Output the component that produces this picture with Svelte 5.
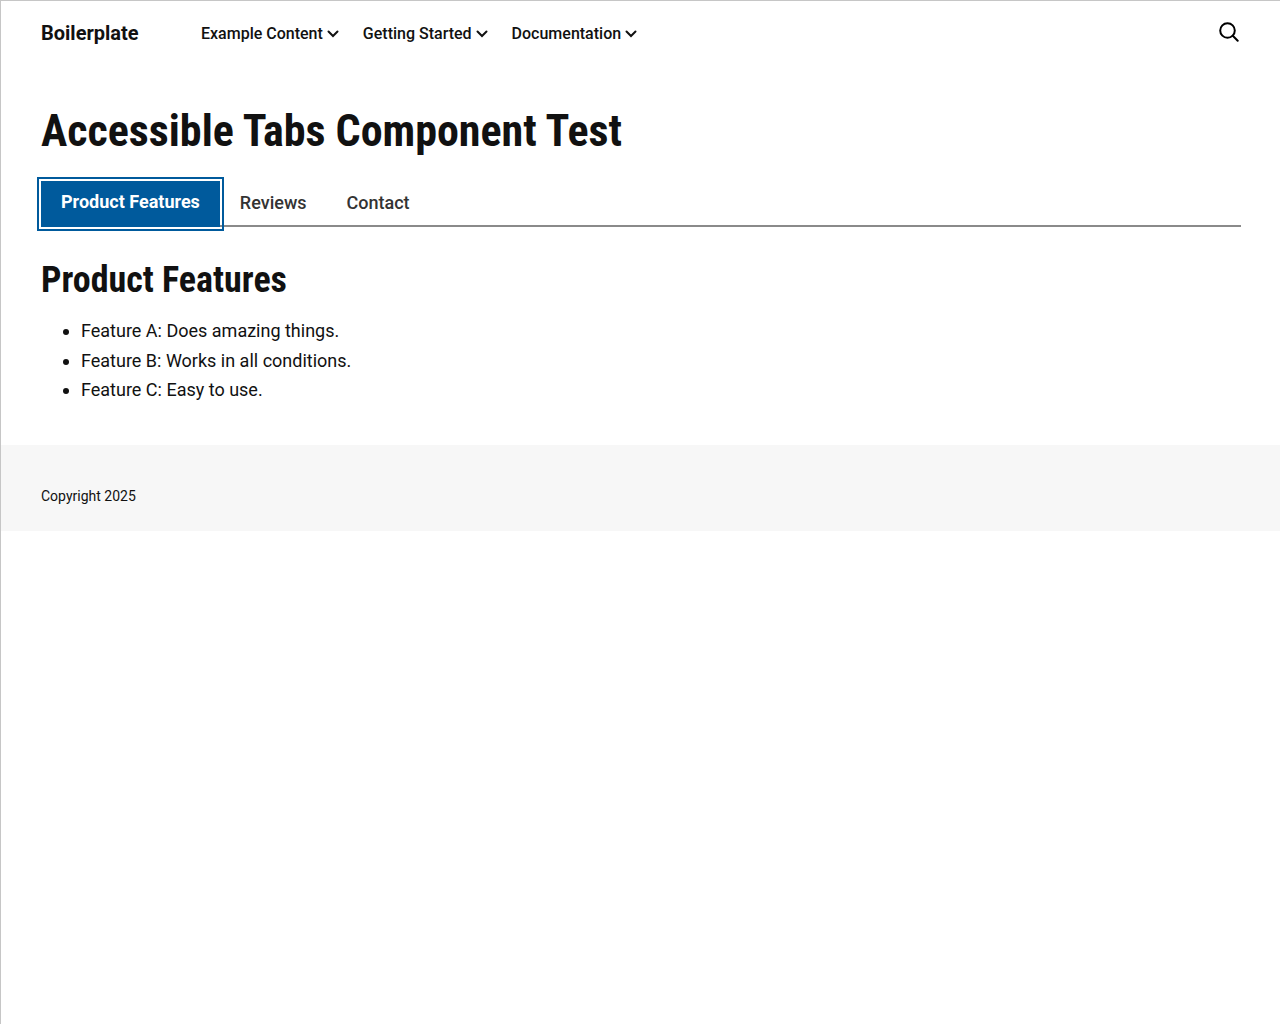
<script>
  const menus = ['Example Content', 'Getting Started', 'Documentation'];
  const tabs = [
    { id: 'features', label: 'Product Features' },
    { id: 'reviews', label: 'Reviews' },
    { id: 'contact', label: 'Contact' }
  ];
  let active = $state('features');
  const title = $derived(tabs.find((t) => t.id === active).label);
</script>

<div class="page">
  <header>
    <a class="brand" href="#home">Boilerplate</a>
    <nav aria-label="Main">
      {#each menus as menu}
        <button type="button" class="menu" aria-expanded="false">
          {menu}
          <svg width="12" height="8" viewBox="0 0 12 8" aria-hidden="true"><path d="M1.5 1.500 6 6l4.500-4.500" /></svg>
        </button>
      {/each}
    </nav>
    <button type="button" class="search" aria-label="Search">
      <svg width="20" height="20" viewBox="0 0 20 20" aria-hidden="true"><circle cx="8.500" cy="8.500" r="7.300" /><path d="m13.800 13.800 4.900 4.900" /></svg>
    </button>
  </header>

  <main>
    <h1>Accessible Tabs Component Test</h1>
    <div class="tabs" role="tablist" aria-label="Product information">
      {#each tabs as tab}
        <button
          type="button"
          role="tab"
          id={tab.id}
          class:active={active === tab.id}
          aria-selected={active === tab.id}
          aria-controls="panel"
          onclick={() => (active = tab.id)}>{tab.label}</button>
      {/each}
    </div>
    <section id="panel" role="tabpanel" aria-labelledby={active}>
      <h2>{title}</h2>
      {#if active === 'features'}
        <ul>
          <li>Feature A: Does amazing things.</li>
          <li>Feature B: Works in all conditions.</li>
          <li>Feature C: Easy to use.</li>
        </ul>
      {/if}
    </section>
  </main>

  <footer><p>Copyright 2025</p></footer>
</div>

<style>
  .page {
    box-sizing: border-box;
    min-height: 100vh;
    border-top: 1px solid #c6c6c6;
    border-left: 1px solid #c6c6c6;
    background: #fff;
    color: #111;
    font: 400 18px/1.65 Roboto, sans-serif;
  }
  button {
    margin: 0;
    padding: 0;
    border: 0;
    background: none;
    color: inherit;
    font: inherit;
    cursor: pointer;
  }
  svg {
    fill: none;
    stroke: currentColor;
    stroke-width: 2;
    stroke-linecap: round;
    display: block;
  }
  header {
    display: flex;
    align-items: center;
    height: 64px;
    padding: 0 39px 0 40px;
  }
  .brand {
    width: 160px;
    color: inherit;
    font-size: 20px;
    font-weight: 700;
    text-decoration: none;
  }
  nav {
    display: flex;
    flex: 1;
    gap: 24px;
    padding-top: 2px;
  }
  .menu {
    display: flex;
    align-items: center;
    gap: 4px;
    font-size: 16px;
    font-weight: 500;
  }
  .search {
    padding: 0 2px 2px;
    color: #000;
  }
  main {
    padding: 40px 39px 40px 40px;
  }
  h1,
  h2 {
    margin: 0;
    font-family: "Roboto Condensed", Roboto, sans-serif;
    font-weight: 700;
  }
  h1 {
    font-size: 44px;
    line-height: 52px;
  }
  h2 {
    font-size: 36px;
    line-height: 42px;
  }
  .tabs {
    display: flex;
    margin-top: 24px;
    border-bottom: 2px solid #8a8a8a;
  }
  .tabs button {
    padding: 8px 20px;
    color: #333;
    font-weight: 500;
    line-height: 28px;
  }
  .tabs .active {
    margin-bottom: -2px;
    padding-top: 7px;
    padding-bottom: 11px;
    background: #005a9c;
    color: #fff;
    font-weight: 700;
    outline: 2px solid #005a9c;
    outline-offset: 2px;
  }
  #panel {
    padding-top: 32px;
  }
  ul {
    margin: 15px 0 0;
    padding-left: 40px;
  }
  footer {
    padding: 40px 40px 24px;
    background: #f7f7f7;
    font-size: 14px;
    line-height: 22px;
  }
  footer p {
    margin: 0;
  }
</style>
